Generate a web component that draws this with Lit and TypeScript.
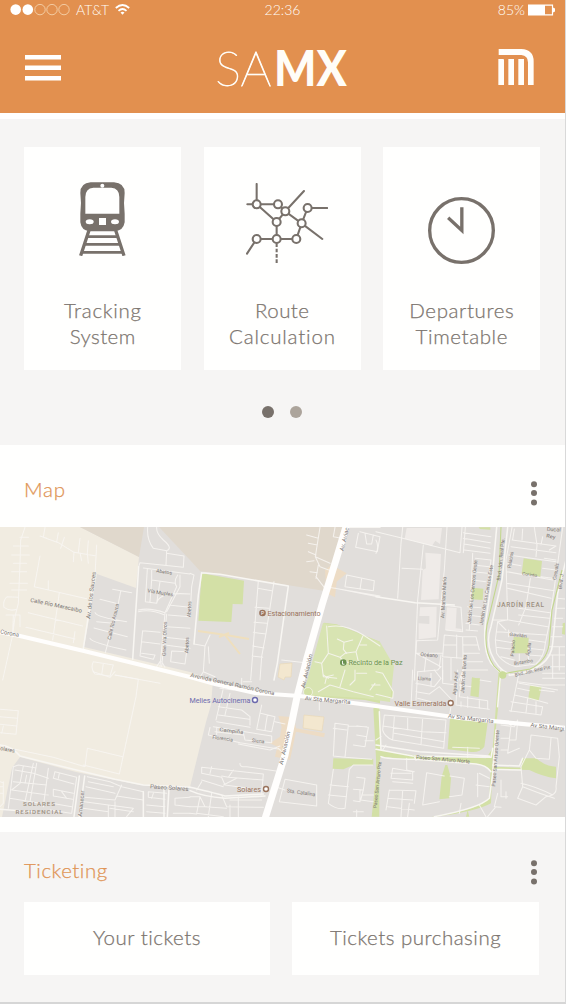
import { LitElement, html, svg, css } from "lit";
import { customElement, property } from "lit/decorators.js";

type Label = [string, number, number, number, number, number?, string?];

/* Street map: each sheet is drawn on a grid of three units per pixel. */
interface Sheet {
  x: number;
  y: number;
  greens: string;
  pale?: string;
  orange?: string;
  thin: string;
  wide?: string;
  labels: Label[];
}

const SHEETS: Sheet[] = [
  {
    x: 0, y: 520,
    greens: "",
    thin: `M75 22L62 60L60 130L55 250L45 290L38 345L8 480 M60 52H85 M60 78H40M60 78H85 M35 105H88 M40 130H80 M35 155H80 M30 190H82 M35 210H80
      M55 232L22 230Q8 240 12 262Q30 275 50 268 M18 285H60V320 M40 285L38 340
      M135 22L130 52L175 68L222 97L285 107 M120 48L140 55 M175 38L170 66 M193 52L182 85 M240 55L235 97 M265 62L262 100L265 130 M290 75L285 165 M222 97L220 125 M240 98L245 122
      M120 108L103 200L260 236 M145 182V210 M85 278L248 318 M78 322L225 357 M178 218L158 360 M225 335L220 368
      M338 208L395 218 M362 214L355 250L316 398 M300 238L348 250 M285 278Q290 292 380 305 M282 324L382 350 M270 355Q275 368 378 390 M290 305L340 310
      M443 22Q440 60 460 85L500 92Q520 85 490 60Q468 40 470 22 M500 92L498 135 M500 100L552 108L550 142L420 128L416 140
      M430 144L570 162 M442 146L436 245L470 250L480 185 M455 148V180L525 190 M455 180L450 245 M470 250Q475 215 570 222 M533 165Q520 185 530 200L495 278 M540 165V200L500 275
      M415 270Q450 262 495 278 M415 275Q450 266 492 284 M495 280L480 440 M500 282L485 440 M505 255L570 262 M505 285L570 290 M500 320L570 325 M495 352L570 360 M495 375L570 385
      M428 332L420 408L460 418L465 405L425 400 M428 332L480 337 M425 365L480 372 M515 393L512 425L555 432L560 395Z M480 425L470 440M485 425L495 442
      M280 425L340 435L330 468L285 462Q270 445 280 425 M310 430L305 465 M345 465L480 490`,
    wide: "M416 140L398 418 M285 160L250 385",
    labels: [["Calle Río Maracaibo", 90, 245, 12, 17, 158], ["Av. de los Sauces", 270, 297, -83, 17, 142], ["Calle Río Arauca", 332, 360, -77, 15, 110], ["Corona", 0, 340, 11, 17, 57], ["Abetos", 468, 157, 8, 15, 48], ["Vía Muples", 442, 217, 9, 15, 78], ["Gran Vía Olivos", 497, 408, -88, 15, 103], ["Abetos", 565, 400, -88, 15, 48], ["Abetos", 572, 292, -88, 15, 48]],
  },
  {
    x: 190, y: 520,
    greens: "M35 160L162 182L158 253L128 252L124 306L25 302Z M402 308L440 313L570 365V480H370Z",
    orange: "M425 135L470 160L440 185L435 232L410 220L405 150Z",
    thin: `M0 160L12 165L5 200L0 290 M390 22L376 110L420 130 M378 105L355 95 M350 125L372 122 M376 110L390 140L430 155 M385 135L378 175 M360 155L382 158 M378 170L405 205 M350 45L385 55 M355 70L382 75
      M205 182L182 480 M203 205L245 212 M252 185L228 340L215 410L210 480 M195 262L236 265 M192 307L230 310 M190 337L228 342 M188 378L222 384 M186 408L218 412
      M435 22L430 50L455 55 M470 165L465 200L550 212L553 182Z M515 175L510 208 M505 40L497 82L562 95L570 50L510 35 M525 40L530 72H545L550 45 M408 200L570 228
      M435 205L570 232 M375 330L370 340 M275 420L358 430 M12 372L45 378L40 455 M60 345L45 378 M55 380L58 430
      M25 480L40 455L75 470 M410 318L415 400L395 430L400 470 M415 320Q465 310 520 345L498 395L465 400L450 412L415 400 M520 345L570 378 M498 395L505 425L560 430 M450 412Q470 435 500 425 M442 357L462 367L460 388 M462 367L488 360 M530 375L510 375 M395 430L375 425 M400 470L440 475 M460 388L470 400`,
    wide: "M35 158L90 163L295 198L262 430L252 480 M35 158L25 225L12 372 M470 22H570",
    pale: "",
    labels: [["Av. Aviac", 460, 94, -76, 17, 72]],
  },
  {
    x: 376, y: 520,
    greens: "M308 22H343V29L312 27Z M443 115L498 123L493 170L437 160Z M290 203L322 206L320 240L287 238Z M413 350L458 353L455 400L409 400Z M560 310L570 308V345L558 342Z M0 365L12 370L5 405L0 420Z M288 475H312V480H287Z",
    pale: "M92 24L198 24L192 72L178 62L168 78L86 56Z M148 98L195 102L188 238L135 240L140 150L150 145Z M132 262L182 260L180 352L128 358V310L160 312V288H130Z M213 262L242 264L239 325L257 327V333L207 330Z",
    thin: `M0 35L80 55L252 98 M80 22L75 70L65 235 M78 145L140 148 M142 75L125 240L115 480 M213 22L205 150L195 250L185 360L120 362 M252 98L258 22 M268 22L262 98 M0 60Q10 80 0 100 M262 38L345 50 M262 55L343 68 M264 72L342 85 M265 90L342 100
      M290 100L280 330 M345 120L320 300 M298 115L345 120 M292 135L340 140 M290 155L335 160 M288 180L330 185 M275 260L315 263 M275 285L315 290 M270 310L310 315 M270 330L305 333 M210 330L260 335L255 262L195 255
      M122 362L120 400L195 440 M120 400H200 M195 405L190 440 M205 345L260 350L262 480 M205 345L200 410L260 415 M202 375H242 M242 345V415 M262 350H300L310 390 M262 375H305 M262 400H310 M262 425H320 M262 450H335 M250 480L262 450
      M408 22L390 120L395 300L350 300 M408 60L540 78 M405 80L540 98 M398 105L540 125 M395 130L435 137 M392 155L530 180 M392 190L535 212 M395 205L525 235 M505 115L540 120 M500 145L540 150 M495 170L530 175
      M475 22L483 75L480 110 M463 175L450 260L428 315 M560 22L545 130L520 310L508 370 M540 78L520 90 M415 27L410 58 M440 27L438 60 M500 50L495 75
      M428 265L522 278 M428 285L520 295 M398 300L515 320 M393 300L365 305L358 360L362 400Q380 430 420 440L480 432Q505 410 508 370 M365 305L390 330 M362 335L512 345 M460 360L508 367 M360 360L410 368 M360 382L410 388 M455 385L505 390 M455 405L500 408 M375 410L415 420 M398 330V350 M430 402V435 M455 400L460 430
      M545 235L570 237 M540 265H570 M535 295H560 M530 320H560 M525 350H558 M520 380H570 M515 405H570 M495 440H570 M530 405V475 M550 380V450
      M125 455L185 450L195 440 M150 410L145 455 M200 415V480 M225 415V480`,
    wide: "M0 230L118 248L235 255 M362 22L348 180L328 310Q320 390 345 430L380 465 M395 22L378 180L345 320Q330 360 345 400Q365 450 400 462 M570 120L545 220L530 370Q525 450 400 466",
    labels: [["Av. Mariano Mario", 205, 295, -87, 16, 125], ["Jardín de Los Cerezos Oeste", 284, 312, -84, 15, 192], ["Jardín de Los Cerezos Este", 320, 315, -80, 15, 182], ["Blvd. Jdn. Real Pte.", 373, 182, -84, 15, 128], ["Palacios", 404, 145, -80, 15, 50], ["Casuals", 540, 180, -80, 15, 50], ["Ducal", 512, 32, 4, 16, 42], ["Rey", 510, 52, 10, 15, 28], ["Corinto", 438, 165, 8, 14, 45], ["Gavilán", 400, 347, 7, 14, 52], ["Palacio", 413, 410, -85, 14, 50], ["Águila", 460, 408, -82, 14, 40], ["Butambo", 415, 435, -9, 14, 57], ["Blvd. Jdn. Real Pte", 418, 470, -13, 15, 108], ["Océano", 133, 408, 5, 16, 52], ["Blvd. J", 557, 208, -84, 14, 46]],
  },
  {
    x: 0, y: 670,
    greens: "",
    thin: `M0 118L55 122L48 193L0 188 M0 140L52 145 M0 163L50 168 M10 168L5 190 M280 5L330 22L345 5 M345 15L415 28L408 80L358 312L250 285 M45 238L160 262L255 290L262 235L368 260
      M55 285L40 290L25 415 M55 285L105 293 M45 300L100 310L145 325 M70 288L60 340L35 360 M35 360L145 375 M100 280L75 395 M110 280L90 395 M40 335L140 345 M30 385L120 400 M80 315L75 340 M145 295L130 410
      M165 305L230 322L215 430 M165 305L160 325L222 342 M160 358L220 370 M160 358V378L218 388 M155 400L215 410 M150 420L212 430 M185 365L200 385 M178 310L175 325
      M262 320L330 335L365 350 M258 350L345 370 M265 335L340 350 M365 345L345 390L255 382 M365 350L430 365 M350 378L430 390 M253 395L325 405V440 M250 415L325 425 M325 405L400 415L380 440 M345 395V440 M330 415L400 425
      M445 365L500 370 M445 365V382L495 388 M460 370L455 385 M440 405L495 410 M440 425L495 430 M525 385L570 382 M525 385V405L570 410 M520 430H570 M10 335V400L0 410 M0 335L10 338 M0 350H10 M0 370H10`,
    wide: "M0 225Q35 228 60 258L220 298L345 328L430 345L570 352 M238 318L222 440 M254 318L238 440 M492 355V440 M507 355L502 440 M0 418L100 425 M430 365V440",
    labels: [["olares", 0, 240, 11, 17, 44], ["Paseo Solares", 450, 355, 4, 17, 115], ["Amanecer", 245, 440, -84, 16, 78]],
  },
  {
    x: 190, y: 670,
    greens: "M370 0H570V100L525 90L420 83L345 78L340 60Z M550 115L560 300L545 440H568V110Z M430 265L550 268V285L490 285L460 298L428 296Z",
    orange: "M265 138L312 142L318 175L405 190L402 202L318 185L300 270L255 260L262 230L240 220L270 200L275 170Z",
    thin: `M100 55L78 150 M90 55L130 60 M120 70L105 135 M85 110L155 120L180 140V165 M85 135L178 148 M80 155L180 172 M155 25V50L180 55 M160 35H185 M215 105L200 178L245 185L255 140L212 130 M232 135L225 180 M255 155L285 162
      M70 170L245 198V218L165 210L160 188 M60 172L55 195L150 218 M80 172V195 M145 222L240 240L270 228 M150 218L270 238 M265 235L280 250 M150 280Q148 292 170 290L258 303 M75 185L160 195
      M35 292L220 312L215 370 M35 292V310L95 322L105 345L215 360 M65 290L60 310 M130 300L115 322L220 330 M140 325L100 345 M115 322L95 318 M35 330L100 350 M35 335L20 360
      M285 328L380 345V408L268 395Z M265 353L285 360 M0 380H30L45 410L110 415 M30 380L20 430L100 440 M65 370L55 440 M0 410H50 M95 375L110 410L220 412 M120 390H215 M120 405V440 M0 430L20 432 M145 380V440
      M435 160L475 165L465 262L430 258Z M430 175L470 180 M475 168L530 170 M500 168L535 172L530 200L500 195 M530 200L525 230L490 225 M525 212H550 M465 262L545 268 M430 298L415 400Q440 420 465 415L478 298 M420 345L475 350 M415 375L470 380
      M478 298L490 285H548 M500 322L525 325L520 360L490 358 M520 360L512 390L550 395 M510 360V395L490 392 M490 425L520 425 M500 420V440 M515 375H550
      M400 15L415 25 M430 15L410 20L405 40 M465 0L450 50 M495 0V30L480 45 M500 10H530 M385 65L420 45L490 65L550 80 M545 45H570 M555 40L540 60 M388 80V120`,
    wide: "M0 352Q30 358 105 378L220 372 M0 362Q40 380 105 385L225 378",
    labels: [["Avenida General Ramón Corona", 0, 20, 12.5, 17, 258], ["Av Sta Margarita", 344, 90, 5, 17, 138], ["Av. Aviación", 278, 285, -77, 17, 102], ["Av. Aviación", 344, 55, -77, 17, 104], ["Campiña", 88, 183, 7, 15, 72], ["Florencia", 67, 206, 8, 15, 62], ["Siena", 185, 216, 6, 15, 38], ["Sta. Catalina", 290, 367, 8, 16, 86], ["Paseo San Arturo Pte", 560, 415, -84, 15, 140]],
  },
  {
    x: 376, y: 670,
    greens: "M288 22L312 27L308 82L283 77Z M462 46L497 50L488 92L457 86Z M0 5L20 10L52 65L50 85L0 73Z M222 145L335 158L325 230Q310 250 280 245L215 238Z M12 112L15 240L110 255L330 265L350 235L368 0H378L350 270L345 400Q300 425 180 440H168L260 422Q325 405 340 380L344 300Q320 280 290 283L15 260L0 300V225L8 222Z M350 290L435 293L440 265L480 265Q510 290 540 290V325Q500 320 460 300L350 298Z M208 285H214L225 325L220 385L190 388L197 320Z M270 440L275 420L280 440Z",
    thin: `M0 5L20 10L52 65L50 85L0 73 M110 0L105 110 M125 5L120 90 M120 40L175 50L195 25L175 0 M120 65L160 72L190 50L228 90L220 140 M125 85L165 95 M200 0V40L240 45 M165 10V50 M245 0L240 105L340 118 M260 0L250 80L335 92V118 M250 45L285 50 M312 30L345 35 M255 95V110 M275 80V112 M310 88V115
      M430 5L405 125 M430 40L545 60 M425 55L460 62 M490 60L535 65 M415 75L460 85L515 100 M405 95L500 110L495 135L400 122 M455 85L450 128 M480 95V130 M425 35L500 45 M500 10H570 M500 25H570 M500 45H570
      M25 135L210 150L203 235L50 210Q25 200 20 180Z M55 140L50 210 M140 145L135 225 M20 168L140 185L210 188 M55 190L205 215 M95 145V180 M0 210L15 200 M20 240L30 225
      M375 165L415 170L425 150L420 210H400L395 250L430 235 M405 165L400 208 M375 205H400 M375 240H395
      M465 195L545 205L550 260L540 350Q545 375 510 380L480 405L425 385L440 350L435 290L460 240L465 195 M460 240L480 265L520 268L525 205 M435 340Q480 350 530 375 M440 350Q490 370 535 385
      M275 232V262 M230 232L310 235 M50 295L110 305V330L45 325Z M45 310H105 M92 265V300L115 305 M50 335L110 340 M40 360L120 362L115 400 M35 385L110 390 M35 410L115 420 M40 360L30 420 M80 362L75 440 M100 400L95 440
      M152 308L140 405L190 395 M152 308L205 318 M222 318L265 325L258 375L220 380 M305 310V380 M300 345L340 350 M310 310L340 325 M375 330V380H395 M365 370L355 410L375 412 M390 365V385 M255 400L250 430 M310 405L330 440M360 410L335 440`,
    wide: "M0 238L110 258L345 262L350 235 M0 225L130 245L340 258 M15 260Q30 268 120 268L300 282Q330 285 345 305 M10 125L15 240 M375 0L365 110 M360 180L350 310L340 385Q310 415 175 440 M350 285L430 288L440 265 M350 298L435 300 M115 258L120 270",
    labels: [["Llama", 125, 30, 3, 15, 40], ["Agua Azul", 240, 75, -85, 15, 70], ["Jardín del Bonito", 264, 70, -86, 15, 116], ["Av Sta Margarita", 215, 143, 7, 17, 138], ["Av Sta Margi", 463, 170, 7, 17, 102], ["Paseo San Arturo Norte", 120, 266, 5, 16, 162], ["Paseo San Arturo Oriente", 358, 350, -86, 15, 170]],
  },
];

@customElement("city-map")
class CityMap extends LitElement {
  static styles = css`
    :host { display: block; height: 290px; font-weight: 400; }
    svg { display: block; width: 100%; height: 100%; }
    .street { font-family: Roboto, "Noto Sans", sans-serif; fill: #7b7572; }
    .place { font-family: Roboto, "Noto Sans", sans-serif; font-size: 7.2px; }
    .brown { fill: #99735c; }
    .olive { fill: #6b9150; }
    .violet { fill: #6c69ad; }
    .zone { fill: #9c8f80; font-weight: 500; }
  `;

  private label([text, x, y, angle, size, length]: Label) {
    return svg`<text class="street" transform=${`translate(${x} ${y}) rotate(${angle})`} font-size=${size} textLength=${length ?? 60} lengthAdjust="spacingAndGlyphs">${text}</text>`;
  }

  render() {
    const at = (s: Sheet) => `translate(${s.x} ${s.y}) scale(.33333)`;
    return html`<svg viewBox="0 527 565 290" preserveAspectRatio="none">
      <rect y="527" width="566" height="290" fill="#e1dedb" />
      <path fill="#f1ece1" d="M0 527H80L139 557L136 588L97 574L84 647L190 672L213 680L211 705L206 722L190 787L140 785L76 772L20 757L12 768L2 817H0Z" />
      <path fill="#e0d8cc" d="M80 527H144L139 557ZM159 527H346L325 591L200 571L190 560Z" />
      ${SHEETS.map((s) => svg`<g transform=${at(s)}>
        <path d=${s.greens} fill="#d3e0a6" />
        <path d=${s.orange ?? ""} fill="#eddcc5" />
        <path d=${s.pale ?? ""} fill="#efebe8" />
      </g>`)}
      <path fill="#d8e4b2" d="M323 623L337 625L380 642L394 666L390 702L362 698L311 695L304 692Z" />
      ${SHEETS.map((s) => svg`<g transform=${at(s)} fill="none" stroke="#f8f6f2" stroke-linejoin="round" stroke-linecap="round">
        <path d=${s.thin} stroke-width="3.2" opacity=".85" />
        <path d=${s.wide ?? ""} stroke-width="4.6" />
      </g>`)}
      <g fill="none" stroke="#c3d78e" stroke-width="1.1">
        <path d="M501 527L499 575L487 625Q483 650 494 666L502 674L530 669Q546 662 549 645L552 610L562 570" />
      </g>
      <circle cx="502.700" cy="675" r="3.700" fill="#cbdc9a" />
      <circle cx="308" cy="692" r="4.500" fill="#d3e0a6" stroke="#f3f2e8" stroke-width=".8" />
      <path fill="#f3e7cf" stroke="#ead7b4" stroke-width=".6" d="M304 715L324 717L322 731L303 728ZM280 664L292 663L291 677L285 677L284 680L278 677Z" />
      <path fill="none" stroke="#efdfbd" stroke-width="2" d="M198 631L226 635L249 639M225 635L240 654M219 637L229 633" />
      <g fill="none" stroke="#fffefd" stroke-linecap="butt">
        <path stroke-width="4.200" d="M0 632L20 636L84 651L190 677L215 684L255 693L300 696L376 706L460 718L566 728" />
        <path stroke-width="7" d="M348 520L336 560L322 605L307 658L297 697L285 755L264 822" />
      </g>
      ${SHEETS.map((s) => svg`<g transform=${at(s)}>${s.labels.map((l) => this.label(l))}</g>`)}
      <circle cx="262.500" cy="613" r="3.300" fill="#99735c" />
      <text class="place" x="260.900" y="615" style="font-size:5px" fill="#fff">P</text>
      <text class="place brown" x="267.500" y="615.500" textLength="53">Estacionamiento</text>
      <circle cx="343.300" cy="662.500" r="3.300" fill="#6b9150" />
      <path d="M342.500 660.800V664.200H344.500" stroke="#fff" stroke-width=".9" fill="none" />
      <text class="place olive" x="348.500" y="665" textLength="54">Recinto de la Paz</text>
      <text class="place violet" x="189.500" y="702.500" textLength="61">Melies Autocinema</text>
      <circle cx="255" cy="700" r="2.500" fill="#fff" stroke="#6c69ad" stroke-width="1.400" />
      <text class="place brown" x="394.500" y="705.500" textLength="52">Valle Esmeralda</text>
      <circle cx="450.700" cy="703" r="2.500" fill="#fff" stroke="#99735c" stroke-width="1.400" />
      <text class="place brown" x="237" y="791.500" textLength="24">Solares</text>
      <circle cx="266" cy="789" r="2.500" fill="#fff" stroke="#99735c" stroke-width="1.400" />
      <text class="place zone" x="497" y="607" style="font-size:6.500px" textLength="47">JARDÍN REAL</text>
      <text class="place zone" x="23" y="806" style="font-size:6.200px" textLength="32">SOLARES</text>
      <text class="place zone" x="15.500" y="813.700" style="font-size:6.200px" textLength="47">RESIDENCIAL</text>
    </svg>`;
  }
}

@customElement("more-button")
class MoreButton extends LitElement {
  static styles = css`
    :host { display: block; width: 6px; height: 26px; }
    svg { display: block; }
  `;
  render() {
    return html`<svg width="6" height="26" viewBox="0 0 6 26" fill="#78716b">
      <circle cx="3" cy="3.300" r="3" /><circle cx="3" cy="12" r="3" /><circle cx="3" cy="21.500" r="3" />
    </svg>`;
  }
}

const trainIcon = html`<svg width="47" height="74" viewBox="237 127 141 222">
  <path fill="#78716b" fill-rule="evenodd" d="M272 128H342Q374 130 374 160Q370 190 374 222V248Q370 272 346 275H268Q244 272 241 248V222Q245 190 241 160Q241 130 272 128Z
    M280 144Q256 146 256 172V222H358V172Q358 146 334 144Z M297 235V256H318V235Z" />
  <circle cx="307" cy="138" r="6" fill="#fff" />
  <ellipse cx="269" cy="246" rx="12" ry="7.500" fill="#fff" /><ellipse cx="345" cy="246" rx="12" ry="7.500" fill="#fff" />
  <path fill="none" stroke="#78716b" stroke-width="10" d="M267 272L242 348M347 272L372 348" />
  <path fill="none" stroke="#78716b" stroke-width="8" d="M262 291H352M255 314H359M248 338H366" />
</svg>`;

const routeIcon = html`<svg class="route" width="82.300" height="81.300" viewBox="738 130 247 244" stroke="#78716b" stroke-width="6.200" stroke-linecap="round">
  <path fill="none" d="M770 133V194M742 194H834L856 215L912 154M770 194L830 247L856 215L905 251L923 205H982M905 251L967 298M905 251L889 298H770L741 342M830 247V298" />
  <path fill="none" stroke-linecap="butt" stroke-dasharray="11 5" d="M830 311V373" />
  <g fill="#fffffe">
    <circle cx="770" cy="194" r="12" /><circle cx="834" cy="194" r="12" /><circle cx="830" cy="247" r="12" />
    <circle cx="830" cy="298" r="12" /><circle cx="770" cy="298" r="12" /><circle cx="856" cy="215" r="12" />
    <circle cx="923" cy="205" r="12" /><circle cx="905" cy="251" r="12" /><circle cx="889" cy="298" r="12" />
  </g>
</svg>`;

const clockIcon = html`<svg width="67" height="67" viewBox="434.500 170.500 201 201" fill="none" stroke="#78716b">
  <circle cx="535" cy="271" r="95.500" stroke-width="10" />
  <path stroke-width="10" d="M536 201V271L495 233" />
</svg>`;

@customElement("feature-card")
class FeatureCard extends LitElement {
  @property({ attribute: false }) icon: unknown;
  @property({ attribute: false }) lines: string[][] = [];
  @property({ type: Boolean }) low = false;
  static styles = css`
    :host { display: flex; flex-direction: column; align-items: center; background: #fffffe; height: 223px; padding-top: 35px; box-sizing: border-box; }
    .icon { height: 115px; display: flex; align-items: flex-start; }
    .icon.low { padding-top: 15px; height: 100px; }
    .icon svg { display: block; }
    .icon .route { margin: 1.3px 0 0 10px; }
    .line { line-height: 26px; font-size: 20.5px; white-space: nowrap; -webkit-text-stroke: 0.25px currentColor; }
  `;
  render() {
    return html`<div class="icon ${this.low ? "low" : ""}">${this.icon}</div>
      ${this.lines.map(([t, ls]) => html`<div class="line" style="letter-spacing:${ls}px;margin-right:-${ls}px">${t}</div>`)}`;
  }
}

@customElement("app-root")
class AppRoot extends LitElement {
  static styles = css`
    :host { display: block; box-sizing: border-box; width: 566px; height: 1004px; overflow: hidden; background: #fffffe; border-right: 1px solid #d9d9d9; border-bottom: 2px solid #d6d6d6; font-family: Lato, "Open Sans", sans-serif; font-weight: 300; color: #7c756f; }
    header { height: 113px; background: #e2904f; color: #fffdf8; }
    .status { display: grid; grid-template-columns: 1fr auto 1fr; align-items: center; height: 19px; padding: 0 10px; font-size: 14px; line-height: 19px; }
    .carrier, .power { display: flex; align-items: center; }
    .carrier { gap: 6px; }
    .power { justify-content: flex-end; gap: 3px; }
    .power svg, .carrier svg { display: block; }
    .bar { display: grid; grid-template-columns: 1fr auto 1fr; align-items: center; padding: 0 31px 0 25px; height: 97px; }
    .bar svg { display: block; }
    .metro { justify-self: end; }
    .brand { font-size: 48.5px; line-height: 60px; font-weight: 100; display: flex; -webkit-text-stroke: 0.8px currentColor; margin: 0 0 2px 2px; }
    .brand b { font-weight: 900; -webkit-text-stroke: 0; display: block; width: 72px; margin-left: 2.5px; transform: scaleX(0.92); transform-origin: left; }
    .features { margin-top: 6px; height: 326px; box-sizing: border-box; background: #f6f5f4; padding: 28px 25px 0 24px; }
    .cards { display: grid; grid-template-columns: repeat(3, 157px); justify-content: space-between; }
    .pager { display: flex; justify-content: center; gap: 16px; padding: 36px 1px 0 0; }
    .dot { width: 12px; height: 12px; border-radius: 50%; background: #aca49b; }
    .dot.on { background: #78716b; }
    .head { display: flex; justify-content: space-between; padding: 0 28px 0 24px; color: #e09455; font-size: 20.5px; line-height: 26px; -webkit-text-stroke: 0.25px currentColor; }
    .head.map { height: 51px; padding-top: 31px; letter-spacing: 0.8px; }
    .head.map more-button { margin-top: 5px; }
    .tickets { margin-top: 15px; height: 170px; background: #f6f5f4; }
    .head.ticket { height: 45px; padding-top: 25px; letter-spacing: 0.5px; }
    .head.ticket more-button { margin-top: 3px; }
    .buttons { display: grid; grid-template-columns: 246px 247px; justify-content: space-between; padding: 0 26px 0 24px; }
    .btn { height: 73px; background: #fffffe; font-size: 20.5px; line-height: 71px; text-align: center; letter-spacing: 0.5px; -webkit-text-stroke: 0.25px currentColor; }
  `;

  render() {
    return html`
      <header>
        <div class="status">
          <div class="carrier">
            <svg width="60" height="12" viewBox="0 0 60 12">
              <circle cx="5.700" cy="5.600" r="5.300" fill="#fff" /><circle cx="17.800" cy="5.600" r="5.300" fill="#fff" />
              <g fill="none" stroke="#f6d9b5" stroke-width=".8"><circle cx="30" cy="5.600" r="5.200" /><circle cx="42" cy="5.600" r="5.200" /><circle cx="54" cy="5.600" r="5.200" /></g>
            </svg>
            <span>AT&amp;T</span>
            <svg width="15" height="11" viewBox="0 0 15 11" fill="none" stroke="#fff" stroke-width="1.700">
              <path d="M.8 4Q7.500-2 14.200 4M3.500 6.800Q7.500 3.200 11.500 6.800" /><path d="M5.500 8.500Q7.500 6.800 9.500 8.500L7.500 10.800Z" fill="#fff" stroke="none" />
            </svg>
          </div>
          <span>22:36</span>
          <div class="power"><span>85%</span>
            <svg width="27" height="12" viewBox="0 0 27 12"><path fill="#fff" d="M0 .5H17V11.500H0ZM25 3.500L27 4.500V7.500L25 8.500Z" /><path fill="none" stroke="#fff" stroke-width="1.200" d="M17 1.100H24.500V10.900H17" /></svg>
          </div>
        </div>
        <div class="bar">
          <svg width="36" height="26" viewBox="0 0 36 26" fill="#fff"><path d="M0 0H36V4.500H0ZM0 10.500H36V15H0ZM0 21H36V25.500H0Z" /></svg>
          <div class="brand"><span>SA</span><b>MX</b></div>
          <svg class="metro" width="36" height="36.300" viewBox="645 148 108 109" fill="#fffefb">
            <path d="M647 148H715Q752 150 752 185V256H735V188Q735 168 715 166H647ZM646 178H660Q663 178 663 181V256H646ZM676 178H693V256H676ZM706 178H723V256H706Z" />
          </svg>
        </div>
      </header>
      <section class="features">
        <div class="cards">
          <feature-card .icon=${trainIcon} .lines=${[["Tracking", "0.7"], ["System", "0.4"]]}></feature-card>
          <feature-card .icon=${routeIcon} .lines=${[["Route", "0.4"], ["Calculation", "0.8"]]}></feature-card>
          <feature-card low .icon=${clockIcon} .lines=${[["Departures", "0.6"], ["Timetable", "0.6"]]}></feature-card>
        </div>
        <div class="pager"><i class="dot on"></i><i class="dot"></i></div>
      </section>
      <div class="head map"><span>Map</span><more-button></more-button></div>
      <city-map></city-map>
      <section class="tickets">
        <div class="head ticket"><span>Ticketing</span><more-button></more-button></div>
        <div class="buttons"><div class="btn">Your tickets</div><div class="btn">Tickets purchasing</div></div>
      </section>`;
  }
}
